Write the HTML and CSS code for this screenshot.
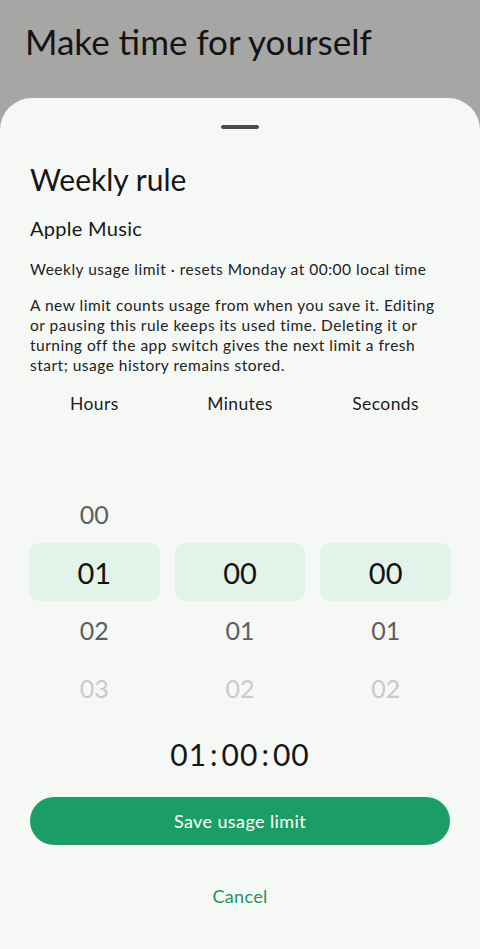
FILE: index.html
```html
<!DOCTYPE html>
<html lang="en">
<head>
  <meta charset="UTF-8">
  <meta name="viewport" content="width=device-width, initial-scale=1.0">
  <title>Weekly rule</title>
  <link rel="stylesheet" href="styles.css">
</head>
<body>
  <div class="page">
    <h1 class="page-title">Make time for yourself</h1>
  </div>

  <!-- Bottom sheet over the dimmed page -->
  <div class="sheet">
    <div class="handle"></div>

    <h2 class="sheet-title">Weekly rule</h2>
    <h3 class="app-name">Apple Music</h3>
    <p class="meta">Weekly usage limit · resets Monday at 00:00 local time</p>
    <p class="note">A new limit counts usage from when you save it. Editing or pausing this rule keeps its used time. Deleting it or turning off the app switch gives the next limit a fresh start; usage history remains stored.</p>

    <div class="picker">
      <div class="col">
        <div class="col-label">Hours</div>
        <div class="wheel">
          <div class="cell"></div>
          <div class="cell near">00</div>
          <div class="cell current">01</div>
          <div class="cell near">02</div>
          <div class="cell far">03</div>
        </div>
      </div>
      <div class="col">
        <div class="col-label">Minutes</div>
        <div class="wheel">
          <div class="cell"></div>
          <div class="cell"></div>
          <div class="cell current">00</div>
          <div class="cell near">01</div>
          <div class="cell far">02</div>
        </div>
      </div>
      <div class="col">
        <div class="col-label">Seconds</div>
        <div class="wheel">
          <div class="cell"></div>
          <div class="cell"></div>
          <div class="cell current">00</div>
          <div class="cell near">01</div>
          <div class="cell far">02</div>
        </div>
      </div>
    </div>

    <div class="total">01<span class="sep">:</span>00<span class="sep">:</span>00</div>

    <button class="save-btn">Save usage limit</button>
    <button class="cancel-btn">Cancel</button>
  </div>
</body>
</html>
```

FILE: styles.css
```css
body {
  font-family: Lato, "Noto Sans", sans-serif;
  margin: 0;
  padding: 0;
  background-color: #a6a6a5;
  color: #151515;
  height: 949px;
  overflow: hidden;
}

.page {
  padding: 18px 25px 0;
}

.page-title {
  margin: 0;
  font-size: 35px;
  font-weight: 400;
  line-height: 46px;
  color: #141414;
}

/* Bottom sheet */
.sheet {
  position: fixed;
  top: 98px;
  left: 0;
  right: 0;
  bottom: 0;
  background-color: #f6f8f6;
  border-radius: 32px 32px 0 0;
  padding: 0 30px;
  display: flex;
  flex-direction: column;
}

.handle {
  width: 38px;
  height: 4px;
  border-radius: 2px;
  background-color: #4a4b4f;
  margin: 27px auto 0;
}

.sheet-title {
  margin: 30px 0 0;
  font-size: 30px;
  font-weight: 400;
  line-height: 40px;
  color: #161616;
}

.app-name {
  margin: 16px 0 0;
  font-size: 20px;
  font-weight: 400;
  line-height: 26px;
  letter-spacing: 0.3px;
  color: #161616;
}

.meta {
  margin: 18px 0 0;
  font-size: 15.5px;
  line-height: 20px;
  letter-spacing: 0.5px;
  color: #222;
}

.note {
  margin: 16px 0 0;
  font-size: 15.5px;
  line-height: 20px;
  letter-spacing: 0.5px;
  color: #222;
}

/* Time picker */
.picker {
  display: grid;
  grid-template-columns: repeat(3, 1fr);
  column-gap: 15px;
  margin: 17px -1px 0;
}

.col {
  display: flex;
  flex-direction: column;
  align-items: stretch;
}

.col-label {
  text-align: center;
  font-size: 17.5px;
  line-height: 24px;
  letter-spacing: 0.4px;
  color: #1c1c1c;
}

.wheel {
  margin-top: 11px;
}

.cell {
  height: 58px;
  display: flex;
  align-items: center;
  justify-content: center;
  font-size: 25px;
  color: #5f5f5f;
}

.cell.current {
  background-color: #e2f3e9;
  border-radius: 10px;
  font-size: 29px;
  color: #121212;
}

.cell.far {
  color: #c9cbc9;
}

.total {
  margin-top: 17px;
  text-align: center;
  font-size: 30px;
  line-height: 40px;
  letter-spacing: 1px;
  color: #161616;
}

.total .sep {
  margin: 0 3px;
}

.save-btn {
  margin-top: 23px;
  height: 48px;
  width: 100%;
  border: none;
  border-radius: 24px;
  background-color: #1a9e65;
  color: #fff;
  font-family: inherit;
  font-size: 18px;
  letter-spacing: 0.4px;
  cursor: pointer;
}

.cancel-btn {
  margin: 32px auto 0;
  border: none;
  background: none;
  color: #179563;
  font-family: inherit;
  font-size: 18px;
  letter-spacing: 0.3px;
  padding: 8px 16px;
  cursor: pointer;
}
```
